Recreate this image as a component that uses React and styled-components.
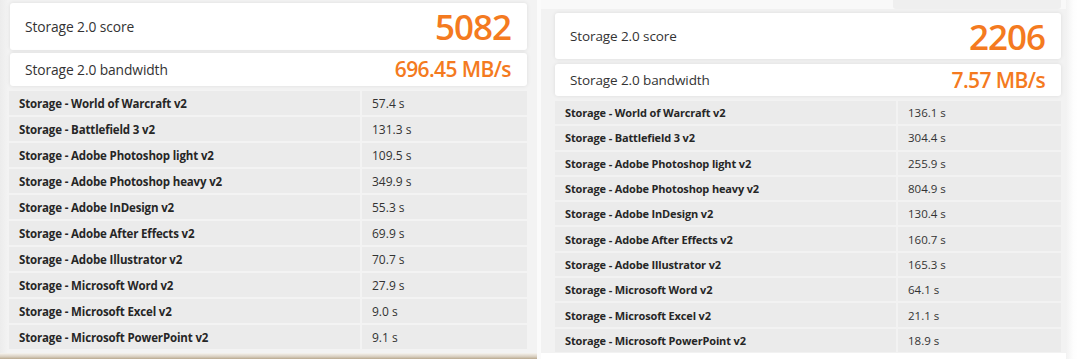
import React from "react";
import styled, { createGlobalStyle } from "styled-components";

const Global = createGlobalStyle`
  html, body { margin: 0; padding: 0; background: #ffffff; }
  body { font-family: "Open Sans", "Liberation Sans", sans-serif; color: #333; }
`;

const Page = styled.div`
  display: flex;
  width: 1078px;
  height: 359px;
  overflow: hidden;
  background: #fff;
`;

const LeftPanel = styled.section`
  width: 537px;
  height: 359px;
  display: flex;
  flex-direction: column;
  background: linear-gradient(to right, #ececec 0px, #f3f3f3 8px, #f3f3f3 100%);
`;

const LeftInner = styled.div`
  flex: 1;
  display: flex;
  flex-direction: column;
  padding: 3px 10px 0 9px;
`;

const BottomStrip = styled.div`
  height: 6px;
  background: linear-gradient(to bottom, #f6f4f0, #d9cfc0 60%, #b9a98f);
`;

const Divider = styled.div`
  width: 4px;
  background: #fbfbfb;
`;

const RightPanel = styled.section`
  width: 525px;
  height: 359px;
  display: flex;
  flex-direction: column;
  background: #f2f2f2;
`;

const TopStrip = styled.div`
  height: 9px;
  display: flex;
  background: #f9f9f9;
`;

const TopStripDark = styled.div`
  margin-left: 352px;
  width: 168px;
  background: #efefef;
  border-bottom-left-radius: 3px;
  border-bottom-right-radius: 3px;
`;

const RightInner = styled.div`
  flex: 1;
  display: flex;
  flex-direction: column;
  padding: 4px 0 0 14px;
  width: 506px;
`;

const RightEdge = styled.div`
  width: 12px;
  background: linear-gradient(to right, #f2f2f2, #fdfdfd 60%, #ffffff);
`;

const RightWrap = styled.div`
  display: flex;
  flex: 1;
`;

const BottomWhite = styled.div`
  height: 6px;
  background: #fff;
`;

const Card = styled.div`
  display: flex;
  align-items: center;
  justify-content: space-between;
  background: #fff;
  border-radius: 3px;
  box-shadow: 0 0 4px rgba(0, 0, 0, 0.09);
  height: ${(p) => p.$h}px;
  margin-left: ${(p) => p.$ml || 0}px;
  margin-bottom: ${(p) => p.$mb}px;
  padding: 0 16px 0 15px;
  box-sizing: border-box;
`;

const CardLabel = styled.span`
  font-size: ${(p) => p.$fs || 13.5}px;
  color: #333;
  letter-spacing: -0.1px;
`;

const Score = styled.span`
  font-size: 35px;
  font-weight: 600;
  color: #f47a20;
  letter-spacing: -1px;
  line-height: 1;
`;

const Bandwidth = styled.span`
  font-size: 21px;
  font-weight: 600;
  color: #f47a20;
  letter-spacing: -0.6px;
  line-height: 1;
`;

const Table = styled.div`
  display: grid;
  grid-template-columns: ${(p) => p.$split}px 1fr;
  grid-auto-rows: ${(p) => p.$rh}px;
  gap: 2px 2px;
`;

const NameCell = styled.div`
  background: #ebebeb;
  display: flex;
  align-items: center;
  padding-left: 10px;
  font-size: ${(p) => p.$fs}px;
  font-weight: 700;
  color: #262626;
  white-space: nowrap;
  letter-spacing: -0.15px;
`;

const ValueCell = styled.div`
  background: #ebebeb;
  display: flex;
  align-items: center;
  padding-left: 10px;
  font-size: ${(p) => p.$fs + 0.5}px;
  color: #333;
  white-space: nowrap;
`;

const names = [
  "Storage - World of Warcraft v2",
  "Storage - Battlefield 3 v2",
  "Storage - Adobe Photoshop light v2",
  "Storage - Adobe Photoshop heavy v2",
  "Storage - Adobe InDesign v2",
  "Storage - Adobe After Effects v2",
  "Storage - Adobe Illustrator v2",
  "Storage - Microsoft Word v2",
  "Storage - Microsoft Excel v2",
  "Storage - Microsoft PowerPoint v2",
];

const leftVals = ["57.4 s", "131.3 s", "109.5 s", "349.9 s", "55.3 s", "69.9 s", "70.7 s", "27.9 s", "9.0 s", "9.1 s"];
const rightVals = ["136.1 s", "304.4 s", "255.9 s", "804.9 s", "130.4 s", "160.7 s", "165.3 s", "64.1 s", "21.1 s", "18.9 s"];

function Results({ vals, split, rh, fs }) {
  return (
    <Table $split={split} $rh={rh}>
      {names.map((n, i) => (
        <React.Fragment key={n}>
          <NameCell $fs={fs}>{n}</NameCell>
          <ValueCell $fs={fs}>{vals[i]}</ValueCell>
        </React.Fragment>
      ))}
    </Table>
  );
}

export default function App() {
  return (
    <>
      <Global />
      <Page>
        <LeftPanel>
          <LeftInner>
            <Card $h={47} $mb={3} $ml={1}>
              <CardLabel $fs={13.8}>Storage 2.0 score</CardLabel>
              <Score>5082</Score>
            </Card>
            <Card $h={33} $mb={5} $ml={1}>
              <CardLabel $fs={13.8}>Storage 2.0 bandwidth</CardLabel>
              <Bandwidth>696.45 MB/s</Bandwidth>
            </Card>
            <Results vals={leftVals} split={351} rh={24} fs={11.5} />
          </LeftInner>
          <BottomStrip />
        </LeftPanel>
        <Divider />
        <RightWrap>
          <RightPanel>
            <TopStrip>
              <TopStripDark />
            </TopStrip>
            <RightInner>
              <Card $h={46} $mb={5}>
                <CardLabel $fs={13.5}>Storage 2.0 score</CardLabel>
                <Score>2206</Score>
              </Card>
              <Card $h={32} $mb={5}>
                <CardLabel $fs={13.5}>Storage 2.0 bandwidth</CardLabel>
                <Bandwidth>7.57 MB/s</Bandwidth>
              </Card>
              <Results vals={rightVals} split={341} rh={23.3} fs={11} />
            </RightInner>
            <BottomWhite />
          </RightPanel>
          <RightEdge />
        </RightWrap>
      </Page>
    </>
  );
}
